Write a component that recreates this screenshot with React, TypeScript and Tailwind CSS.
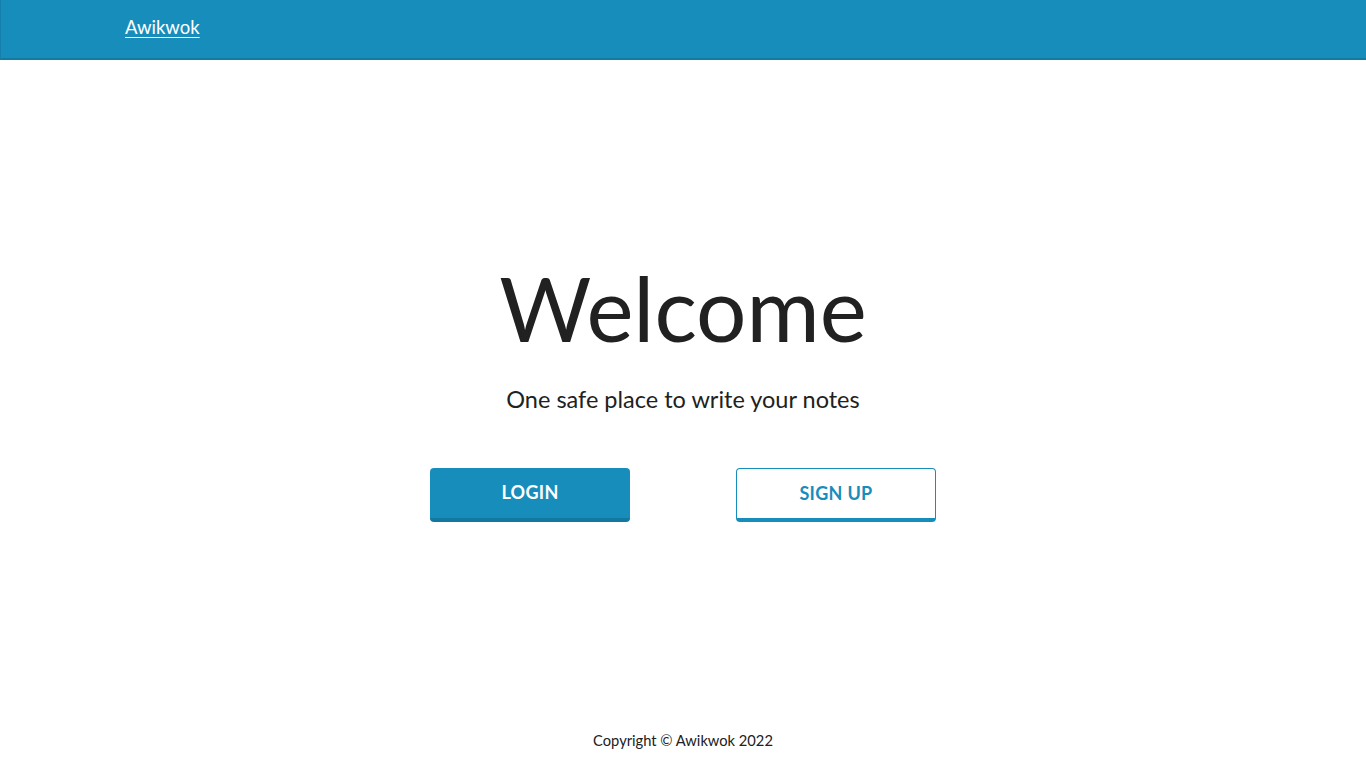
const App = (): any => {
  return (
    <div
      className="min-h-screen flex flex-col bg-white text-[#212121]"
      style={{ fontFamily: "Lato, 'Noto Sans', sans-serif" }}
    >
      <header className="h-[60px] bg-[#178dbb] border-l border-[#1580ab] border-b-2 border-b-[#137aa3] flex items-center">
        <a href="#" className="ml-[124px] -mt-[2px] text-[18.5px] text-white underline underline-offset-[3px] decoration-1">
          Awikwok
        </a>
      </header>

      <main className="flex-1 flex flex-col items-center justify-center pt-[12px]">
        <h1 className="text-[89px] leading-none font-normal">Welcome</h1>
        <p className="mt-[36px] text-[23.5px] leading-none">One safe place to write your notes</p>
        <div className="flex gap-[106px] mt-[56px]">
          <button className="w-[200px] h-[54px] rounded-[4px] bg-[#178dbb] border-b-4 border-[#13789f] text-white font-bold text-[18px] tracking-[0.3px]">
            LOGIN
          </button>
          <button className="w-[200px] h-[54px] rounded-[4px] bg-white border border-[#178dbb] border-b-4 text-[#178dbb] font-bold text-[18px] tracking-[0.3px]">
            SIGN UP
          </button>
        </div>
      </main>

      <footer className="h-[54px] flex items-center justify-center text-[14.7px]">
        Copyright © Awikwok 2022
      </footer>
    </div>
  );
};

export default App;
